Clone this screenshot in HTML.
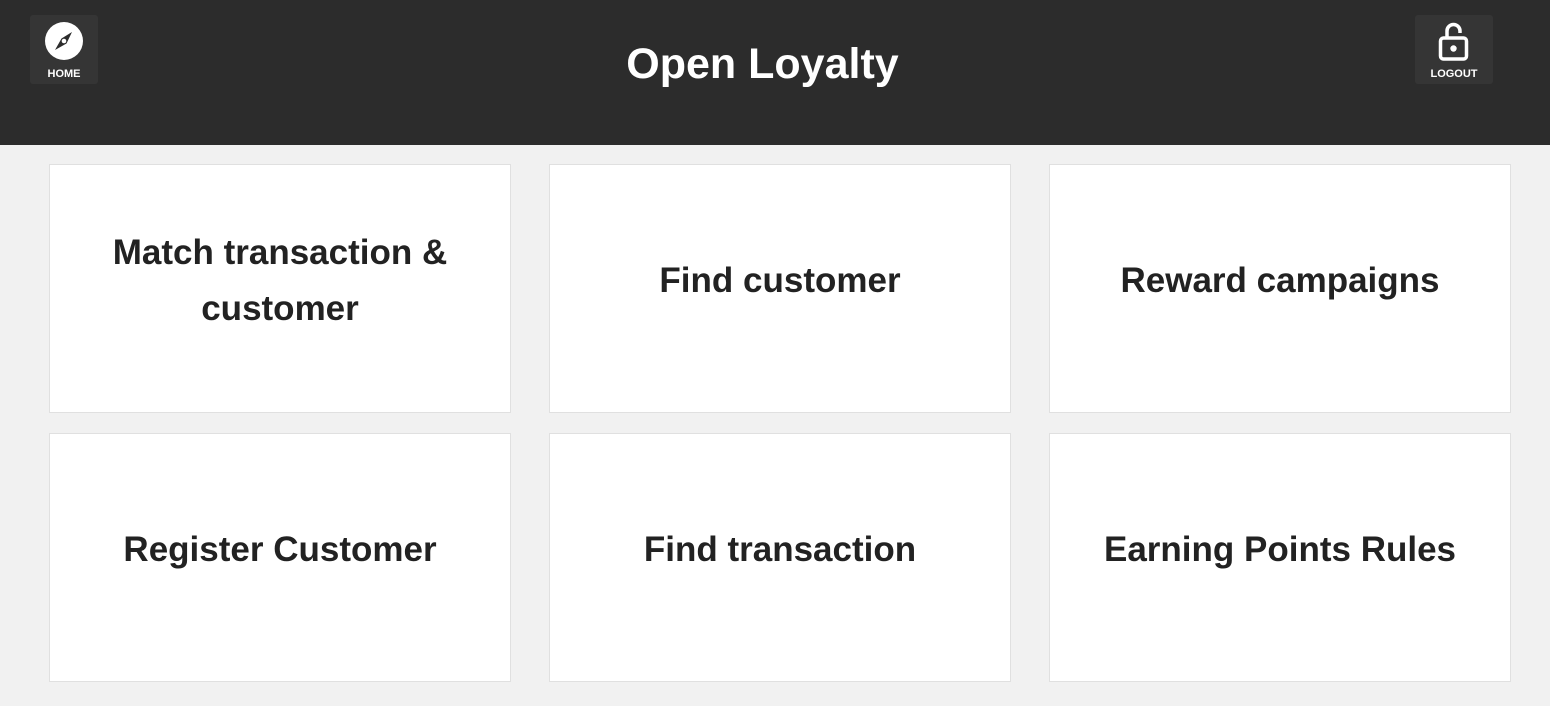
<!DOCTYPE html>
<html><head><style>
body{margin:0;width:1550px;height:706px;background:#f1f1f1;font-family:"Liberation Sans",sans-serif;overflow:hidden;position:relative}
.hdr{position:absolute;left:0;top:0;width:1550px;height:145px;background:#2c2c2c}
.title{position:absolute;left:0;width:1525px;top:40px;text-align:center;color:#fff;font-size:43px;font-weight:bold}
.btn{position:absolute;top:15px;height:69px;background:#353535;border-radius:3px;color:#fff;font-size:11px;font-weight:bold;text-align:center}
.btn span{position:absolute;left:0;right:0;top:53px}
.card{position:absolute;width:460px;height:247px;background:#fff;border:1px solid #e0e0e0;display:flex;align-items:center;justify-content:center;text-align:center;font-weight:bold;font-size:35px;color:#222;line-height:56px;box-sizing:content-box}
.card div{margin-top:-15px}
</style></head><body>
<div class="hdr">
<div class="btn" style="left:30px;width:68px">
<svg style="position:absolute;left:15px;top:7px" width="38" height="38" viewBox="0 0 38 38"><circle cx="19" cy="19" r="19" fill="#fff"/><path d="M27 10 L21.5 21.5 L10 28 L16.5 16.5 Z" fill="#2c2c2c"/><circle cx="19" cy="19" r="2.3" fill="#fff"/></svg>
<span>HOME</span></div>
<div class="title">Open Loyalty</div>
<div class="btn" style="left:1415px;width:78px">
<svg style="position:absolute;left:23px;top:5px" width="32" height="42" viewBox="0 0 32 42"><path d="M9 18 V11 a6.5 6.5 0 0 1 13 0 V13" fill="none" stroke="#fff" stroke-width="3.5"/><rect x="2.5" y="18" width="26" height="21" rx="3" fill="none" stroke="#fff" stroke-width="3.5"/><circle cx="15.5" cy="28.5" r="3.2" fill="#fff"/></svg>
<span>LOGOUT</span></div>
</div>
<div class="card" style="left:49px;top:164px"><div>Match transaction &amp;<br>customer</div></div>
<div class="card" style="left:549px;top:164px"><div>Find customer</div></div>
<div class="card" style="left:1049px;top:164px"><div>Reward campaigns</div></div>
<div class="card" style="left:49px;top:433px"><div>Register Customer</div></div>
<div class="card" style="left:549px;top:433px"><div>Find transaction</div></div>
<div class="card" style="left:1049px;top:433px"><div>Earning Points Rules</div></div>
</body></html>
